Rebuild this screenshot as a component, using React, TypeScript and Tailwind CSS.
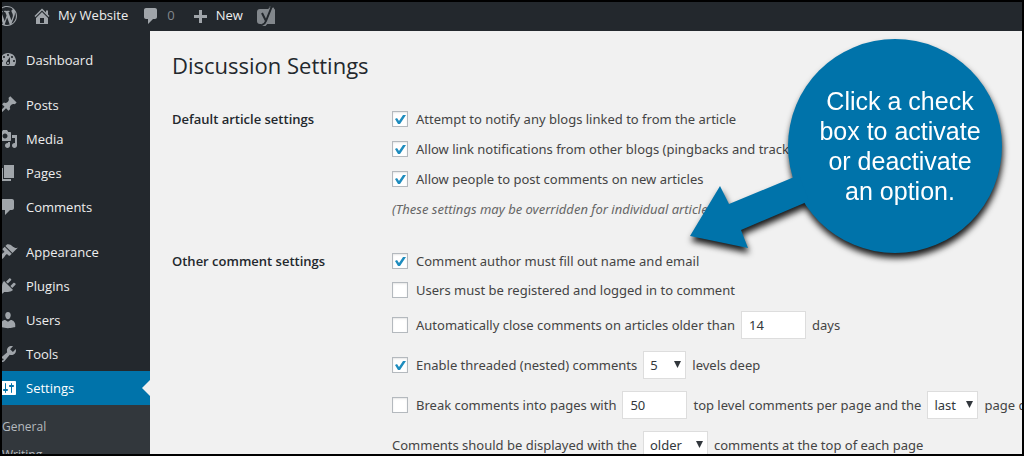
import { ReactNode } from "react";

const ICONS = {
  wordpress:
    "M20 10c0-5.51-4.49-10-10-10C4.48 0 0 4.49 0 10c0 5.52 4.48 10 10 10 5.51 0 10-4.48 10-10zM7.78 15.37L4.37 6.22c.55-.02 1.17-.08 1.17-.08.5-.06.44-1.13-.06-1.11 0 0-1.45.11-2.37.11-.18 0-.37 0-.58-.01C4.12 2.69 6.87 1.11 10 1.11c2.33 0 4.45.87 6.05 2.34-.68-.11-1.65.39-1.65 1.58 0 .74.45 1.36.9 2.1.35.61.55 1.36.55 2.46 0 1.49-1.4 5-1.4 5l-3.03-8.37c.54-.02.82-.17.82-.17.5-.05.44-1.25-.06-1.22 0 0-1.44.12-2.38.12-.87 0-2.33-.12-2.33-.12-.5-.03-.56 1.2-.06 1.22l.92.08 1.26 3.41zM17.41 10c.24-.64.74-1.87.43-4.25.7 1.29 1.05 2.71 1.05 4.25 0 3.29-1.73 6.24-4.4 7.78.97-2.59 1.94-5.2 2.92-7.78zM6.1 18.09C3.12 16.65 1.11 13.53 1.11 10c0-1.3.23-2.48.72-3.59C3.25 10.3 4.67 14.2 6.1 18.09zm4.03-6.63l2.58 6.98c-.86.29-1.76.45-2.71.45-.79 0-1.57-.11-2.29-.33.81-2.38 1.62-4.74 2.42-7.1z",
  home: "M16 8.5l1.53 1.53-1.06 1.06L10 4.6l-6.47 6.49-1.06-1.06L10 2.5l4 4v-2h2v4zm-6-2.46l6 5.99V18H4v-5.97zM12 17v-5H8v5h4z",
  comments: "M5 2h9c1.1 0 2 .9 2 2v7c0 1.1-.9 2-2 2h-2l-5 5v-5H5c-1.1 0-2-.9-2-2V4c0-1.1.9-2 2-2z",
  plus: "M9 4h3v5h5v3h-5v5H9v-5H4V9h5z",
  dashboard:
    "M3.76 16h12.48c1.1-1.37 1.76-3.11 1.76-5 0-4.42-3.58-8-8-8s-8 3.58-8 8c0 1.89.66 3.63 1.76 5zM10 4c.55 0 1 .45 1 1s-.45 1-1 1-1-.45-1-1 .45-1 1-1zM6 6c.55 0 1 .45 1 1s-.45 1-1 1-1-.45-1-1 .45-1 1-1zm8 0c.55 0 1 .45 1 1s-.45 1-1 1-1-.45-1-1 .45-1 1-1zm-5.37 5.55L12 7v6c0 1.1-.9 2-2 2s-2-.9-2-2c0-.57.24-1.08.63-1.45zM4 10c.55 0 1 .45 1 1s-.45 1-1 1-1-.45-1-1 .45-1 1-1zm12 0c.55 0 1 .45 1 1s-.45 1-1 1-1-.45-1-1 .45-1 1-1zm-5 3c0-.55-.45-1-1-1s-1 .45-1 1 .45 1 1 1 1-.45 1-1z",
  post: "M10.44 3.02l1.82-1.82 6.36 6.35-1.83 1.82c-1.05-.68-2.48-.57-3.41.36l-.75.75c-.92.93-1.04 2.35-.35 3.41l-1.83 1.82-2.41-2.41-2.8 2.79c-.42.42-3.38 2.71-3.8 2.29s1.86-3.39 2.28-3.81l2.79-2.79L4.1 9.36l1.83-1.82c1.05.69 2.48.57 3.4-.36l.75-.75c.93-.92 1.05-2.35.36-3.41z",
  media:
    "M13 11V4c0-.55-.45-1-1-1h-1.67L9 1H5L3.67 3H2c-.55 0-1 .45-1 1v7c0 .55.45 1 1 1h10c.55 0 1-.45 1-1zM7 4.5c1.38 0 2.5 1.12 2.5 2.5S8.38 9.5 7 9.5 4.5 8.38 4.5 7 5.62 4.5 7 4.5zM14 6h5v10.5c0 1.38-1.12 2.5-2.5 2.5S14 17.88 14 16.5s1.12-2.5 2.5-2.5c.17 0 .34.02.5.05V9h-3V6zm-4 8.05V13h2v3.5c0 1.38-1.12 2.5-2.5 2.5S7 17.88 7 16.5 8.12 14 9.5 14c.17 0 .34.02.5.05z",
  page: "M6 15V2h10v13H6zm-1 1h8v2H3V5h2v11z",
  appearance:
    "M14.48 11.06L7.41 3.99l1.5-1.5c.5-.56 2.3-.47 3.51.32 1.21.8 1.43 1.28 2.91 2.1 1.18.64 2.45 1.26 4.45.85zm-.71.71L6.7 4.7 4.93 6.47c-.39.39-.39 1.02 0 1.41l1.06 1.06c.39.39.39 1.03 0 1.42-.6.6-1.43 1.11-2.21 1.69-.35.26-.7.53-1.01.84C1.43 14.23.4 16.08 1.4 17.07c.99 1 2.84-.03 4.18-1.36.31-.31.58-.66.85-1.02.57-.78 1.08-1.61 1.69-2.21.39-.39 1.02-.39 1.41 0l1.06 1.06c.39.39 1.02.39 1.41 0z",
  plugins:
    "M13.11 4.36L9.87 7.6 8 5.73l3.24-3.24c.35-.34 1.05-.2 1.56.32.52.51.66 1.21.31 1.55zm-8 1.77l.91-1.12 9.01 9.01-1.19.84c-.71.71-2.63 1.16-3.82 1.16H6.14L4.9 17.26c-.59.59-1.54.59-2.12 0-.59-.58-.59-1.53 0-2.12l1.24-1.24v-3.88c0-1.13.4-3.19 1.09-3.89zm7.26 3.97l3.24-3.24c.34-.35 1.04-.21 1.55.31.52.51.66 1.21.31 1.55l-3.24 3.25z",
  users:
    "M10 9.25c-2.27 0-2.73-3.44-2.73-3.44C7 4.02 7.82 2 9.97 2c2.16 0 2.98 2.02 2.71 3.81 0 0-.41 3.44-2.68 3.44zm0 2.57L12.72 10c2.39 0 4.52 2.33 4.52 4.53v2.49s-3.65 1.13-7.24 1.13c-3.65 0-7.24-1.13-7.24-1.13v-2.49c0-2.25 1.94-4.48 4.47-4.48z",
  tools:
    "M16.68 9.77c-1.34 1.34-3.3 1.67-4.95.99l-5.41 6.52c-.99.99-2.59.99-3.58 0s-.99-2.59 0-3.57l6.52-5.42c-.68-1.65-.35-3.61.99-4.95 1.28-1.28 3.12-1.62 4.72-1.06l-2.89 2.89 2.82 2.82 2.86-2.87c.53 1.58.18 3.39-1.08 4.65zM3.81 16.21c.4.39 1.04.39 1.43 0 .4-.4.4-1.04 0-1.43-.39-.4-1.03-.4-1.43 0-.39.39-.39 1.03 0 1.43z",
  settings:
    "M18 16V4c0-.55-.45-1-1-1H3c-.55 0-1 .45-1 1v12c0 .55.45 1 1 1h14c.55 0 1-.45 1-1zM8 11h1c.55 0 1 .45 1 1s-.45 1-1 1H8v1.5c0 .28-.22.5-.5.5s-.5-.22-.5-.5V13H6c-.55 0-1-.45-1-1s.45-1 1-1h1V5.5c0-.28.22-.5.5-.5s.5.22.5.5V11zm5-2h-1c-.55 0-1-.45-1-1s.45-1 1-1h1V5.5c0-.28.22-.5.5-.5s.5.22.5.5V7h1c.55 0 1 .45 1 1s-.45 1-1 1h-1v5.5c0 .28-.22.5-.5.5s-.5-.22-.5-.5V9z",
};

type IconName = keyof typeof ICONS;

const MENU: { name: string; icon: IconName }[][] = [
  [{ name: "Dashboard", icon: "dashboard" }],
  [
    { name: "Posts", icon: "post" },
    { name: "Media", icon: "media" },
    { name: "Pages", icon: "page" },
    { name: "Comments", icon: "comments" },
  ],
  [
    { name: "Appearance", icon: "appearance" },
    { name: "Plugins", icon: "plugins" },
    { name: "Users", icon: "users" },
    { name: "Tools", icon: "tools" },
    { name: "Settings", icon: "settings" },
  ],
];

function Icon({ name, className = "" }: { name: IconName; className?: string }) {
  return (
    <svg viewBox="0 0 20 20" aria-hidden="true" className={`h-5 w-5 shrink-0 fill-current ${className}`}>
      <path fillRule="evenodd" d={ICONS[name]} />
    </svg>
  );
}

function YoastIcon() {
  return (
    <svg viewBox="0 0 20 20" aria-hidden="true" className="h-5 w-5">
      <path fill="#82878c" d="M4 3h14a1 1 0 0 1 1 1v14H4a3 3 0 0 1-3-3V6a3 3 0 0 1 3-3z" />
      <path fill="none" stroke="#82878c" strokeWidth="5" d="M16 1l-6 14q-1 3-4 4" />
      <path fill="none" stroke="#23282d" strokeWidth="2" d="M6 7l4 8M16 0l-6 15q-1 3-4 4" />
      <path fill="none" stroke="#23282d" d="M13 1h4" />
    </svg>
  );
}

function AdminBar() {
  return (
    <header className="flex h-[29px] shrink-0 items-center bg-[#23282d] pb-0.5 text-[13px] text-[#eee]">
      <a href="#about" aria-label="About WordPress" className="-ml-[5px] text-[#a0a5aa]">
        <Icon name="wordpress" />
      </a>
      <a href="#site" className="ml-[15px] flex items-center gap-[6px]">
        <Icon name="home" className="text-[#a0a5aa]" />
        My Website
      </a>
      <a href="#comments" className="ml-[13px] flex items-center gap-[6px] text-[#82878c]">
        <Icon name="comments" className="text-[#a0a5aa]" />0
      </a>
      <a href="#new" className="ml-[15px] flex items-center gap-[6px]">
        <Icon name="plus" className="text-[#a0a5aa]" />
        New
      </a>
      <a href="#seo" aria-label="SEO" className="ml-[13px]">
        <YoastIcon />
      </a>
    </header>
  );
}

function Sidebar() {
  return (
    <nav className="w-[148px] shrink-0 overflow-hidden bg-[#23282d] pt-3 text-[13px] text-[#eee]">
      <div className="flex flex-col gap-[11px]">
        {MENU.map((group, i) => (
          <ul key={i}>
            {group.map(({ name, icon }) => {
              const active = name === "Settings";
              return (
                <li key={name}>
                  <a
                    href={`#${name.toLowerCase()}`}
                    className={`flex h-[34px] items-center gap-2 ${active ? "bg-[#0073aa] text-white" : ""}`}
                  >
                    <Icon name={icon} className={`-ml-1 ${active ? "" : "text-[#a0a5aa]"}`} />
                    <span className="pt-0.5">{name}</span>
                    {active && (
                      <span className="ml-auto border-y-8 border-r-8 border-y-transparent border-r-[#f1f1f1]" />
                    )}
                  </a>
                </li>
              );
            })}
          </ul>
        ))}
      </div>
      <ul className="bg-[#32373c] pt-2 text-xs text-[#b4b9be]">
        <li>
          <a href="#general" className="flex h-7 items-center">General</a>
        </li>
        <li>
          <a href="#writing" className="flex h-7 items-center">Writing</a>
        </li>
      </ul>
    </nav>
  );
}

function Check({ id, checked = false, children }: { id: string; checked?: boolean; children: ReactNode }) {
  return (
    <span className="flex items-center gap-2">
      <span className="relative flex">
        <input
          id={id}
          type="checkbox"
          defaultChecked={checked}
          className="peer h-4 w-4 appearance-none border border-[#b4b9be] bg-white shadow-[inset_0_1px_2px_rgba(0,0,0,0.1)]"
        />
        <svg
          viewBox="0 0 16 16"
          aria-hidden="true"
          className="pointer-events-none absolute inset-0 hidden fill-[#1e8cbe] peer-checked:block"
        >
          <path d="M3 8l2-1 2 3 4-6h3l-6 9H6z" />
        </svg>
      </span>
      <label htmlFor={id}>{children}</label>
    </span>
  );
}

const field = "h-7 border border-[#ddd] bg-white text-[13px] text-[#32373c]";

function NumberBox({ label, value }: { label: string; value: string }) {
  return <input type="text" aria-label={label} defaultValue={value} className={`${field} w-[65px] px-[7px]`} />;
}

function Picker({ label, value, options, width }: { label: string; value: string; options: string[]; width: string }) {
  return (
    <span className="relative flex">
      <select aria-label={label} defaultValue={value} className={`${field} ${width} appearance-none pl-[6px]`}>
        {options.map((o) => (
          <option key={o}>{o}</option>
        ))}
      </select>
      <svg
        viewBox="0 0 7 7"
        aria-hidden="true"
        className="pointer-events-none absolute top-[10px] right-[5px] h-[7px] w-[7px] fill-[#32373c]"
      >
        <path d="M0 0h7L3.5 7z" />
      </svg>
    </span>
  );
}

function Row({ children }: { children: ReactNode }) {
  return <div className="flex items-center gap-[6px]">{children}</div>;
}

function Section({ title, children }: { title: string; children: ReactNode }) {
  return (
    <fieldset className="flex items-start">
      <legend className="float-left w-[220px] shrink-0 font-['Open_Sans',sans-serif] text-[13px] leading-5 font-semibold text-[#23282d]">
        {title}
      </legend>
      <div className="min-w-0 flex-1 whitespace-nowrap">{children}</div>
    </fieldset>
  );
}

function Callout() {
  return (
    <div className="pointer-events-none absolute top-[35px] right-[19px] h-[216px] w-[316px] drop-shadow-[1px_5px_3px_rgba(0,0,0,0.9)]">
      <svg viewBox="0 0 316 216" aria-hidden="true" className="absolute inset-0 fill-[#0073aa]">
        <circle cx="208" cy="109" r="107" />
        <path d="M3 199L33 149l9 18 70-29 10 26-68 29 7 18z" />
      </svg>
      <p className="absolute top-[49px] right-0 w-[216px] pl-[10px] text-center font-['Liberation_Sans',Arial,sans-serif] text-[25px] leading-[30px] text-white">
        Click a check
        <br />
        box to activate
        <br />
        or deactivate
        <br />
        an option.
      </p>
    </div>
  );
}

export default function App() {
  return (
    <div className="relative flex h-screen flex-col overflow-hidden border-2 border-black bg-[#f1f1f1] font-['Open_Sans','Noto_Sans',sans-serif]">
      <AdminBar />
      <div className="flex flex-1">
        <Sidebar />
        <main className="min-w-0 flex-1 pt-[19px] pl-[22px] font-['Noto_Sans',sans-serif] text-[13px] leading-5 text-[#444]">
          <h1 className="font-['Open_Sans',sans-serif] text-[22px] leading-[30px] text-[#23282d]">
            Discussion Settings
          </h1>
          <form className="mt-[29px]">
            <Section title="Default article settings">
              <div className="flex flex-col gap-[10px]">
                <Check id="notify" checked>Attempt to notify any blogs linked to from the article</Check>
                <Check id="pingbacks" checked>
                  Allow link notifications from other blogs (pingbacks and trackbacks) on new articles
                </Check>
                <Check id="allow" checked>Allow people to post comments on new articles</Check>
                <p className="text-[#666] italic">(These settings may be overridden for individual articles.)</p>
              </div>
            </Section>
            <div className="mt-8">
              <Section title="Other comment settings">
                <div className="flex flex-col gap-[9px]">
                  <Check id="author" checked>Comment author must fill out name and email</Check>
                  <Check id="registered">Users must be registered and logged in to comment</Check>
                </div>
                <div className="mt-[11px] flex flex-col gap-3">
                  <Row>
                    <Check id="close">Automatically close comments on articles older than</Check>
                    <NumberBox label="Days before closing" value="14" />
                    days
                  </Row>
                  <Row>
                    <Check id="threaded" checked>Enable threaded (nested) comments</Check>
                    <Picker label="Levels" value="5" options={["2", "3", "4", "5", "6"]} width="w-[43px]" />
                    levels deep
                  </Row>
                  <Row>
                    <Check id="paged">Break comments into pages with</Check>
                    <NumberBox label="Comments per page" value="50" />
                    top level comments per page and the
                    <Picker label="Default page" value="last" options={["first", "last"]} width="w-[51px]" />
                    page displayed by default
                  </Row>
                  <Row>
                    Comments should be displayed with the
                    <Picker label="Comment order" value="older" options={["older", "newer"]} width="w-[65px]" />
                    comments at the top of each page
                  </Row>
                </div>
              </Section>
            </div>
          </form>
        </main>
      </div>
      <Callout />
    </div>
  );
}
